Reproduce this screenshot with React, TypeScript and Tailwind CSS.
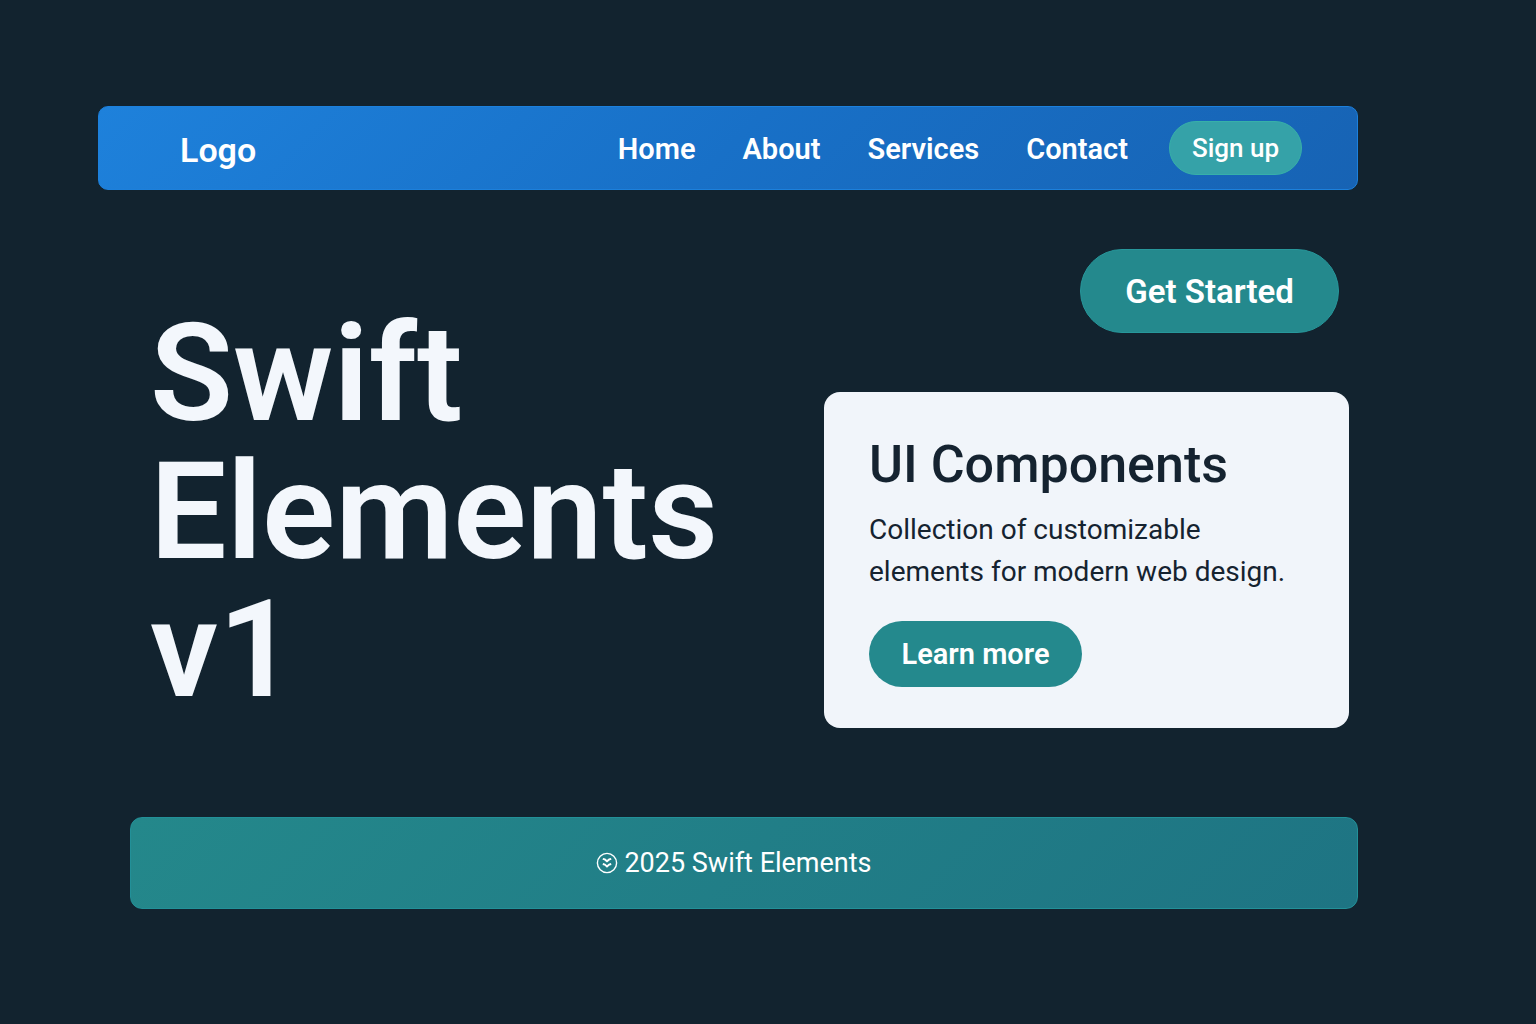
const links = ["Home", "About", "Services", "Contact"];

function FooterIcon() {
  return (
    <svg viewBox="0 0 22 22" className="size-[22px]" fill="none" stroke="currentColor" strokeWidth="1.4" aria-hidden="true">
      <circle cx="11" cy="11" r="9.6" />
      <path d="M6.8 6.8 L8.8 7.4 L11 9.2 L13.2 7.4 L15.2 6.8 M6.8 12 L8.8 12.6 L11 14.4 L13.2 12.6 L15.2 12" strokeWidth="1.9" />
    </svg>
  );
}

export default function App() {
  return (
    <div className="min-h-screen bg-[#12232f] pt-[106px] pr-[178px] pb-[115px] pl-[98px] font-['Roboto',sans-serif] text-white">
      <header className="flex h-[84px] items-center justify-between rounded-[10px] border border-[#1c80dc] bg-linear-135 from-[#1e81db] via-[#1870c7] to-[#1763b4] pr-[55px] pl-[81px]">
        <a href="#" className="pt-1 text-[34px] font-semibold">Logo</a>
        <div className="flex items-center gap-[41px]">
          <nav className="flex items-center gap-[47px] pt-1 text-[29px] font-semibold">
            {links.map((l) => (
              <a key={l} href="#">{l}</a>
            ))}
          </nav>
          <button className="h-[54px] w-[133px] rounded-full border border-[#37b0a8] bg-[#35a2a8] text-[26px] font-medium">Sign up</button>
        </div>
      </header>

      <main className="mt-[59px] flex justify-between pr-[9px] pl-[52px]">
        <h1 className="mt-14 w-[570px] text-[136px] leading-[138px] font-semibold text-[#f3f7fc]">Swift Elements v1</h1>
        <div className="flex w-[525px] flex-col">
          <button className="mr-[10px] h-[84px] w-[259px] self-end rounded-full border border-[#27979b] bg-[#24898d] pt-[2px] text-[33px] font-semibold">Get Started</button>
          <section className="mt-[59px] h-[336px] rounded-2xl bg-[#f1f5fa] px-[45px] pt-[42px] text-[#152330]">
            <h2 className="text-[52px] leading-[62px] font-medium">UI Components</h2>
            <p className="mt-[13px] text-[28px] leading-[42px]">Collection of customizable elements for modern web design.</p>
            <button className="mt-7 h-[66px] w-[213px] rounded-full bg-[#24898d] pt-[2px] text-[29px] font-semibold text-white">Learn more</button>
          </section>
        </div>
      </main>

      <footer className="mt-[89px] ml-8 flex h-[92px] items-center justify-center gap-[6px] rounded-xl border border-[#229098] bg-linear-135 from-[#24888b] to-[#1e7483] pr-5 text-[27px]">
        <FooterIcon />
        <span>2025 Swift Elements</span>
      </footer>
    </div>
  );
}
